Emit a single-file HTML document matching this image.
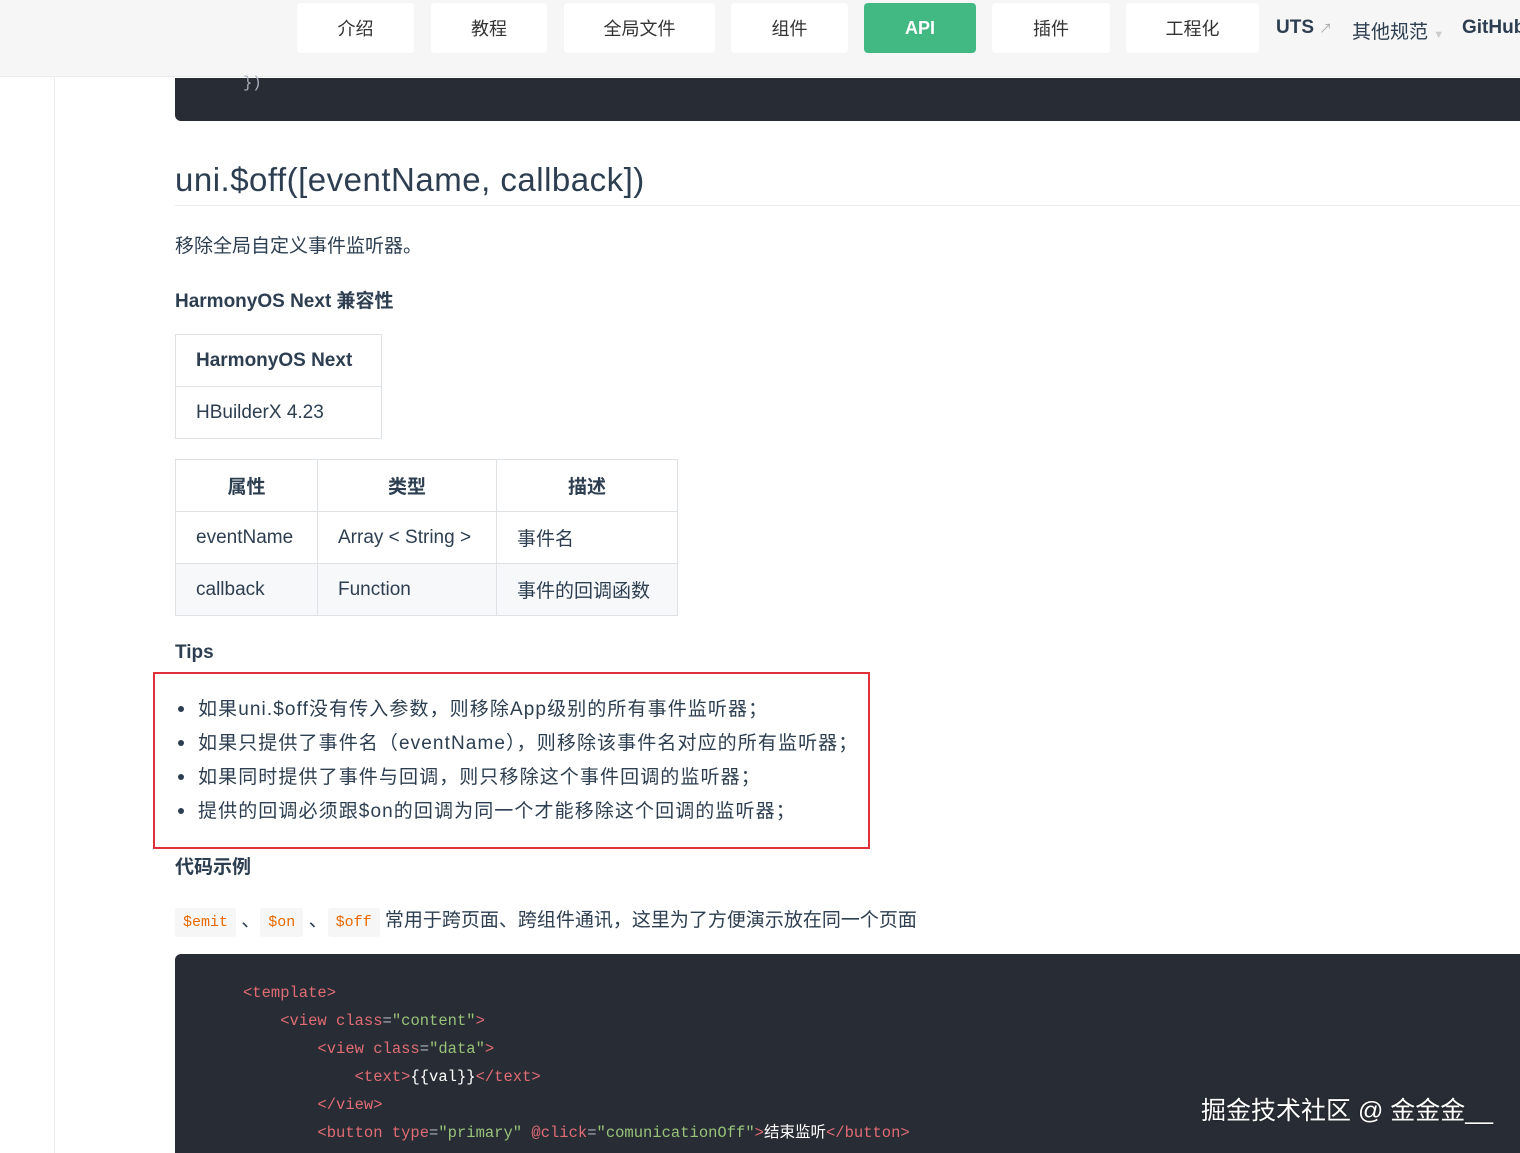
<!DOCTYPE html>
<html><head><meta charset="utf-8"><style>
*{margin:0;padding:0;box-sizing:border-box}
body{width:1520px;height:1153px;overflow:hidden;background:#fff;font-family:"Liberation Sans","Noto Sans CJK SC",sans-serif;color:#2c3e50;position:relative}
.a{position:absolute}
.hdr{left:0;top:0;width:1520px;height:77px;background:#f6f6f6;border-bottom:1px solid #eaecef}
.nb{position:absolute;top:3px;height:50px;background:#fff;border-radius:4px;font-size:18px;color:#333;display:flex;align-items:center;justify-content:center}
.code{background:#282c34;border-radius:6px 0 0 6px}
.mono{font-family:"Liberation Mono","Noto Sans CJK SC",monospace;font-size:15.5px}
table{border-collapse:collapse;font-size:19px}
td,th{border:1px solid #dfe2e5;height:52px;padding:0 20px;text-align:left;font-weight:normal}
th{font-weight:bold}
.t{color:#e06c75}.s{color:#98c379}.w{color:#fff}.p{color:#abb2bf}
.ic{background:#f6f6f6;color:#e96900;padding:6px 8px;border-radius:3px;font-size:15px}
li{list-style:none;position:relative;height:34px;letter-spacing:1.1px}
li:before{content:"";position:absolute;left:-20px;top:12px;width:6px;height:6px;border-radius:3px;background:#2c3e50}
</style></head><body>
<div class="a" style="left:54px;top:77px;width:1px;height:1076px;background:#eaecef"></div>
<div class="a hdr"></div>
<div class="nb" style="left:297px;width:117px">介绍</div>
<div class="nb" style="left:431px;width:116px">教程</div>
<div class="nb" style="left:564px;width:151px">全局文件</div>
<div class="nb" style="left:731px;width:117px">组件</div>
<div class="nb" style="left:864px;width:112px;background:#42b983;color:#fff;font-weight:bold">API</div>
<div class="nb" style="left:992px;width:118px">插件</div>
<div class="nb" style="left:1126px;width:133px">工程化</div>
<div class="a" style="left:1276px;top:17px;font-size:19px;font-weight:bold;color:#2c3e50">UTS <span style="color:#aaa;font-size:13px;font-weight:normal">↗</span></div>
<div class="a" style="left:1352px;top:17px;font-size:19px;color:#2c3e50">其他规范 <span style="color:#ccc;font-size:11px">▼</span></div>
<div class="a" style="left:1462px;top:17px;font-size:19px;font-weight:bold;color:#2c3e50;white-space:nowrap">GitHub</div>

<div class="a code" style="left:175px;top:78px;width:1345px;height:43px;border-radius:0 0 0 6px"><span class="mono p a" style="left:68px;top:-4px">})</span></div>

<div class="a" style="left:175px;top:161px;font-size:33px;letter-spacing:0.5px;color:#2c3e50">uni.$off([eventName, callback])</div>
<div class="a" style="left:175px;top:205px;width:1345px;height:1px;background:#eaecef"></div>
<div class="a" style="left:175px;top:231px;font-size:19px">移除全局自定义事件监听器。</div>
<div class="a" style="left:175px;top:286px;font-size:19px;font-weight:bold">HarmonyOS Next 兼容性</div>
<table class="a" style="left:175px;top:334px"><tr><th style="width:206px">HarmonyOS Next</th></tr><tr><td style="background:#fff">HBuilderX 4.23</td></tr></table>
<table class="a" style="left:175px;top:459px">
<tr><th style="width:142px;text-align:center">属性</th><th style="width:179px;text-align:center">类型</th><th style="width:181px;text-align:center">描述</th></tr>
<tr><td>eventName</td><td>Array &lt; String &gt;</td><td>事件名</td></tr>
<tr style="background:#f6f8fa"><td>callback</td><td>Function</td><td>事件的回调函数</td></tr>
</table>
<div class="a" style="left:175px;top:642px;font-size:19px;font-weight:bold">Tips</div>
<div class="a" style="left:153px;top:672px;width:717px;height:177px;border:2px solid #e0303a"></div>
<ul class="a" style="left:198px;top:694px;font-size:19px">
<li>如果uni.$off没有传入参数，则移除App级别的所有事件监听器；</li>
<li>如果只提供了事件名（eventName），则移除该事件名对应的所有监听器；</li>
<li>如果同时提供了事件与回调，则只移除这个事件回调的监听器；</li>
<li>提供的回调必须跟$on的回调为同一个才能移除这个回调的监听器；</li>
</ul>
<div class="a" style="left:175px;top:852px;font-size:19px;font-weight:bold">代码示例</div>
<div class="a" style="left:175px;top:905px;font-size:19px;white-space:nowrap"><span class="ic mono">$emit</span> 、<span class="ic mono">$on</span> 、<span class="ic mono">$off</span> 常用于跨页面、跨组件通讯，这里为了方便演示放在同一个页面</div>
<div class="a code mono" style="left:175px;top:954px;width:1345px;height:199px;border-radius:6px 0 0 0;line-height:28px;padding:25px 0 0 68px;white-space:pre;color:#abb2bf"><span class="t">&lt;template&gt;</span>
    <span class="t">&lt;view class</span>=<span class="s">"content"</span><span class="t">&gt;</span>
        <span class="t">&lt;view class</span>=<span class="s">"data"</span><span class="t">&gt;</span>
            <span class="t">&lt;text&gt;</span><span class="w">{{val}}</span><span class="t">&lt;/text&gt;</span>
        <span class="t">&lt;/view&gt;</span>
        <span class="t">&lt;button type</span>=<span class="s">"primary"</span> <span class="t">@click</span>=<span class="s">"comunicationOff"</span><span class="t">&gt;</span><span class="w">结束监听</span><span class="t">&lt;/button&gt;</span></div>
<div class="a" style="left:1201px;top:1091px;font-size:25px;color:#fff;text-shadow:0 0 2px rgba(0,0,0,.4)">掘金技术社区 @ 金金金__</div>
</body></html>
